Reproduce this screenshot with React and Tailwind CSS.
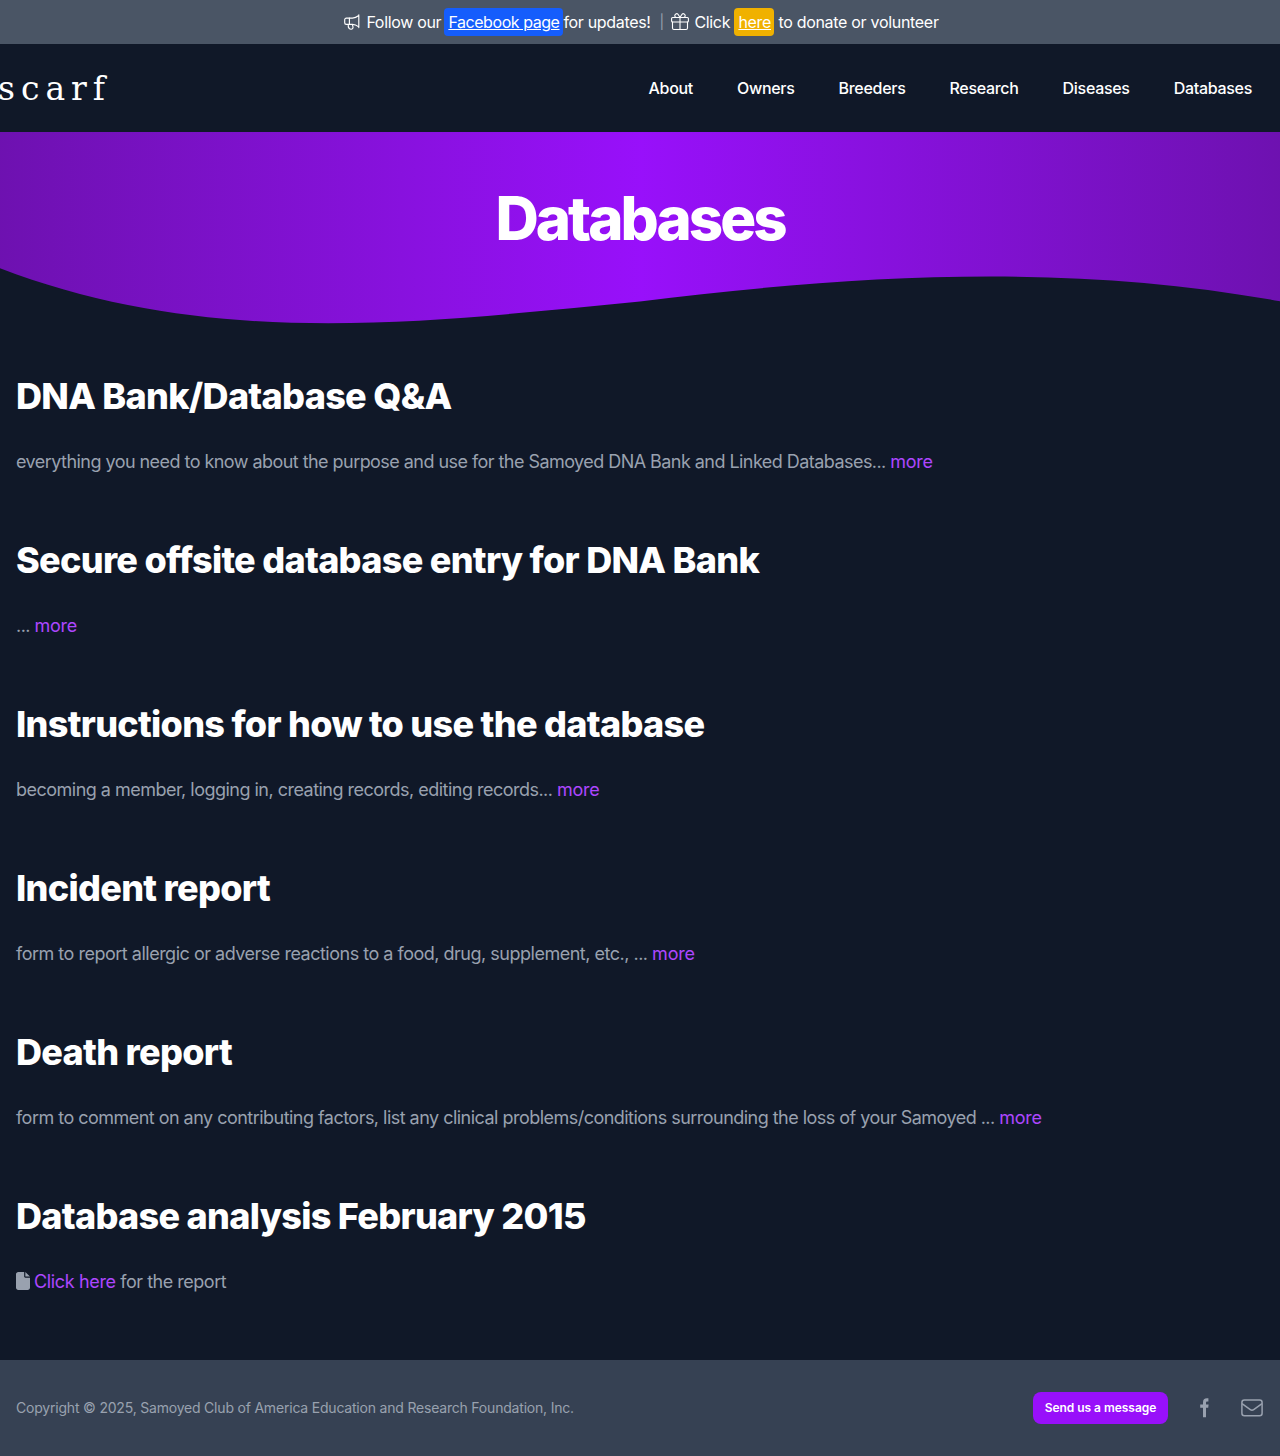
const nav = ["About", "Owners", "Breeders", "Research", "Diseases", "Databases"];

const sections = [
  { title: "DNA Bank/Database Q&A", tracking: "tracking-[-0.548px]", text: "everything you need to know about the purpose and use for the Samoyed DNA Bank and Linked Databases... " },
  { title: "Secure offsite database entry for DNA Bank", tracking: "tracking-[-0.53px]", text: "... " },
  { title: "Instructions for how to use the database", tracking: "tracking-[-0.515px]", text: "becoming a member, logging in, creating records, editing records... " },
  { title: "Incident report", tracking: "tracking-[-0.493px]", text: "form to report allergic or adverse reactions to a food, drug, supplement, etc., ... " },
  { title: "Death report", tracking: "tracking-[-0.525px]", text: "form to comment on any contributing factors, list any clinical problems/conditions surrounding the loss of your Samoyed ... " },
];

function Megaphone() {
  return (
    <svg className="mr-1.5 h-4 w-4" viewBox="0 0 16 16" fill="none" stroke="currentColor" strokeWidth="1.15" strokeLinejoin="round" strokeLinecap="round">
      <path d="M14.8.8v12.8M14.8 1.500C12.500 3.300 10.800 4.100 8.500 4.100H2.300A1.600 1.600 0 0 0 .7 5.700v3a1.600 1.600 0 0 0 1.600 1.600h6.200c2.300 0 4 .8 6.300 2.600" />
      <path d="M5.400 4.100v6.200M4.300 10.500c-.3 2.600.8 4.400 2.600 4.700 1.400.2 2.300-.9 2.100-2.100-.1-.7-.4-1-.5-2.600" />
    </svg>
  );
}

function Gift() {
  return (
    <svg className="mr-[5px] h-[18px] w-[18px]" viewBox="0 0 18 18" fill="none" stroke="currentColor" strokeWidth="1.1" strokeLinejoin="round" strokeLinecap="round">
      <rect x=".6" y="4.500" width="16.800" height="4.500" rx="1" />
      <path d="M1.500 9v6a1.500 1.500 0 0 0 1.500 1.500h12a1.500 1.500 0 0 0 1.500-1.500V9M9 4.500v12" />
      <path d="M9 4.500 7.500 1.900C6.800.7 5.700.5 4.800 1 3.200 1.900 3.600 4.500 5.600 4.500M9 4.500l1.500-2.600C11.200.7 12.300.5 13.200 1 14.800 1.900 14.400 4.500 12.400 4.500" />
    </svg>
  );
}

function Facebook() {
  return (
    <svg className="h-5 w-[10px]" viewBox="0 0 10 20" fill="currentColor">
      <path d="M3 19.200V9.800H.2V6.400H3V4.500C3 1.700 4.300.3 7 .3h1.400v3.300H7.400c-1 0-1.400.5-1.400 1.400v1.400h2.600L8.200 9.800H6v9.400z" />
    </svg>
  );
}

function Mail() {
  return (
    <svg className="h-[18px] w-[22px]" viewBox="0 0 22 18" fill="none" stroke="currentColor" strokeWidth="1.5" strokeLinejoin="round">
      <rect x=".9" y="1" width="20.200" height="15.800" rx="2.500" />
      <path d="m1 4.600 8.300 6.100a2.900 2.900 0 0 0 3.400 0L21 4.600" />
    </svg>
  );
}

function FileIcon() {
  return (
    <svg className="mr-1 inline-block h-[18px] w-[14px] align-[-2px]" viewBox="0 0 384 512" preserveAspectRatio="none" fill="currentColor">
      <path d="M64 0C28.700 0 0 28.700 0 64v384c0 35.300 28.700 64 64 64h256c35.300 0 64-28.700 64-64V160H256c-17.700 0-32-14.300-32-32V0H64zm192 0v128h128L256 0z" />
    </svg>
  );
}

export default function App() {
  return (
    <div className="flex min-h-[1456px] flex-col bg-gray-900 font-['Inter',sans-serif] text-white">
      <div className="flex h-11 items-center justify-center whitespace-pre bg-gray-600 pl-[3px] text-base tracking-[-0.32px]">
        <Megaphone />
        <span className="w-[78px]">Follow our</span>
        <a className="h-7 w-[119px] rounded bg-[#155dfc] px-1 pt-0.5 tracking-[-0.44px] underline">Facebook page</a>
        <span className="w-24">for updates!</span>
        <span className="w-3 text-sm text-gray-400">|</span>
        <Gift />
        <span className="w-10">Click</span>
        <a className="mr-1 h-7 w-10 rounded bg-[#f0b100] px-1 pt-0.5 underline">here</a>
        <span className="tracking-[-0.3px]">to donate or volunteer</span>
      </div>

      <nav className="flex h-22 items-center justify-between pr-7">
        <a className="-ml-0.5 pt-0.5 font-['DejaVu_Serif',serif] text-[33px] tracking-[6px]">scarf</a>
        <div className="flex gap-11 text-base font-medium tracking-[-0.3px]">
          {nav.map((item) => <a key={item}>{item}</a>)}
        </div>
      </nav>

      <header className="grid h-[200px] bg-gradient-to-r from-purple-800 via-purple-600 to-purple-800">
        <h1 className="col-start-1 row-start-1 pt-14 text-center text-6xl leading-none font-extrabold tracking-tighter">Databases</h1>
        <svg className="col-start-1 row-start-1 h-[200px] w-full fill-gray-900" viewBox="0 0 1280 200" preserveAspectRatio="none">
          <path d="M0 136.300C213 218 427 190 640 169.500C853 143 1067 130 1280 169.300V200H0Z" />
        </svg>
      </header>

      <main className="flex-1 px-4 pt-11">
        {sections.map(({ title, text, tracking }) => (
          <section key={title} className="h-41">
            <h2 className="text-4xl font-extrabold tracking-[-0.7px]">{title}</h2>
            <p className="mt-8 text-lg text-gray-400">
              <span className={tracking}>{text}</span><a className="tracking-[-0.25px] text-purple-500">more</a>
            </p>
          </section>
        ))}
        <section>
          <h2 className="text-4xl font-extrabold tracking-[-0.7px]">Database analysis February 2015</h2>
          <p className="mt-8 text-lg tracking-[-0.48px] text-gray-400">
            <FileIcon />
            <a className="tracking-[-0.35px] text-purple-500">Click here</a> for the report
          </p>
        </section>
      </main>

      <footer className="flex h-24 items-center justify-between bg-gray-700 pr-[17px] pl-4 text-gray-400">
        <p className="text-sm tracking-[-0.2px]">Copyright © 2025, Samoyed Club of America Education and Research Foundation, Inc.</p>
        <div className="flex items-center">
          <button className="mr-8 h-8 w-[135px] rounded-lg bg-purple-600 text-xs font-semibold tracking-[-0.03px] text-white">Send us a message</button>
          <span className="mr-[31px]"><Facebook /></span>
          <Mail />
        </div>
      </footer>
    </div>
  );
}
